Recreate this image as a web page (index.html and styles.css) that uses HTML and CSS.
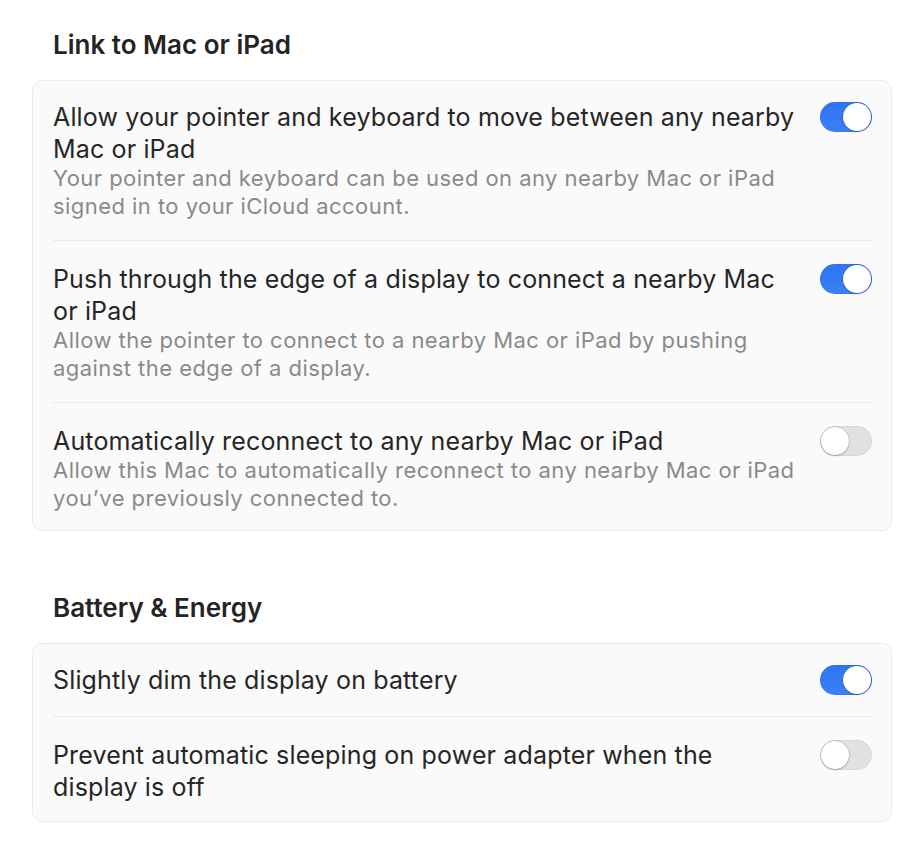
FILE: index.html
```html
<!DOCTYPE html>
<html lang="en">
<head>
    <meta charset="UTF-8">
    <meta name="viewport" content="width=device-width, initial-scale=1.0">
    <title>Link to Mac or iPad</title>
    <link rel="stylesheet" href="styles.css">
</head>
<body>
    <div class="page">
        <h2 class="section-title">Link to Mac or iPad</h2>
        <div class="group">
            <div class="row">
                <div class="row-text">
                    <div class="row-title">Allow your pointer and keyboard to move between any nearby Mac or iPad</div>
                    <div class="row-desc">Your pointer and keyboard can be used on any nearby Mac or iPad signed in to your iCloud account.</div>
                </div>
                <span class="toggle on"><span class="knob"></span></span>
            </div>
            <div class="row">
                <div class="row-text">
                    <div class="row-title">Push through the edge of a display to connect a nearby Mac or iPad</div>
                    <div class="row-desc">Allow the pointer to connect to a nearby Mac or iPad by pushing against the edge of a display.</div>
                </div>
                <span class="toggle on"><span class="knob"></span></span>
            </div>
            <div class="row">
                <div class="row-text">
                    <div class="row-title">Automatically reconnect to any nearby Mac or iPad</div>
                    <div class="row-desc">Allow this Mac to automatically reconnect to any nearby Mac or iPad you’ve previously connected to.</div>
                </div>
                <span class="toggle"><span class="knob"></span></span>
            </div>
        </div>

        <h2 class="section-title second">Battery &amp; Energy</h2>
        <div class="group">
            <div class="row">
                <div class="row-text">
                    <div class="row-title">Slightly dim the display on battery</div>
                </div>
                <span class="toggle on"><span class="knob"></span></span>
            </div>
            <div class="row">
                <div class="row-text">
                    <div class="row-title">Prevent automatic sleeping on power adapter when the display is off</div>
                </div>
                <span class="toggle"><span class="knob"></span></span>
            </div>
        </div>
    </div>
</body>
</html>
```

FILE: styles.css
```css
body {
    margin: 0;
    background: #ffffff;
    font-family: Inter, "Noto Sans", sans-serif;
    color: #262626;
}

.page {
    padding: 30px 20px 0 32px;
}

.section-title {
    margin: 0 0 20px 21px;
    font-size: 26px;
    line-height: 30px;
    font-weight: 600;
    color: #242424;
}

.section-title.second {
    margin-top: 62px;
}

.group {
    background: #fafafa;
    border: 1px solid #ebebeb;
    border-radius: 10px;
}

.row {
    display: flex;
    align-items: flex-start;
    gap: 20px;
    margin: 0 19px 0 20px;
    padding: 22px 0 20px;
    border-bottom: 1px solid #e9e9e9;
}

.row:first-child {
    padding-top: 20px;
}

.row:last-child {
    border-bottom: none;
    padding-bottom: 18px;
}

.row-text {
    flex: 1;
}

.row-title {
    font-size: 25px;
    line-height: 32px;
    letter-spacing: 0.15px;
    color: #262626;
}

.row-desc {
    margin-top: -1px;
    font-size: 22px;
    line-height: 28px;
    letter-spacing: 0.45px;
    color: #8a8a8a;
}

.toggle {
    position: relative;
    flex: none;
    width: 52px;
    height: 30px;
    margin-top: 1px;
    border-radius: 15px;
    background: #e1e1e1;
    box-shadow: inset 0 0 0 1px rgba(0, 0, 0, 0.04);
}

.toggle.on {
    background: linear-gradient(#2f74f3, #3a80f6);
}

.toggle .knob {
    position: absolute;
    top: 1px;
    left: 1px;
    width: 28px;
    height: 28px;
    border-radius: 50%;
    background: #ffffff;
    box-shadow: 0 0 0 0.5px rgba(0, 0, 0, 0.2), 0 1px 2px rgba(0, 0, 0, 0.2);
}

.toggle.on .knob {
    left: 23px;
}
```
